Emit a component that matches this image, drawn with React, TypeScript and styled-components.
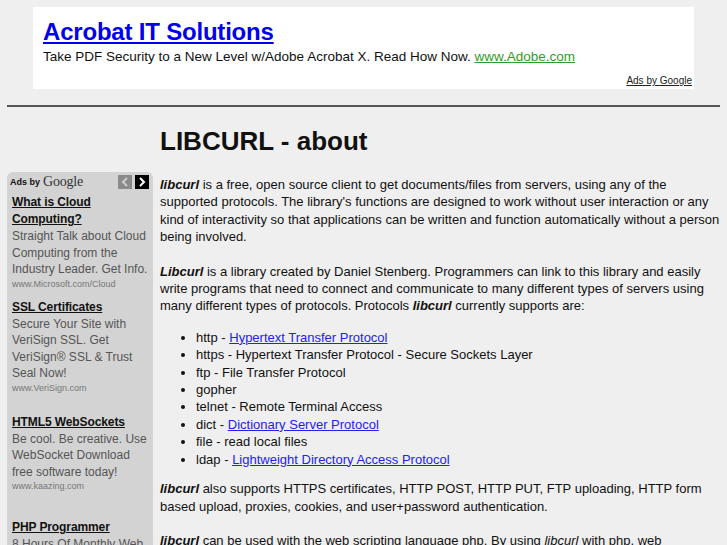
import React from 'react';
import styled, {createGlobalStyle} from 'styled-components';

const Global = createGlobalStyle`
  html, body {
    margin: 0;
    padding: 0;
    background: #efefef;
    font-family: "Liberation Sans", Arial, sans-serif;
    color: #111111;
  }
`;

const Page = styled.div`
  width: 727px;
  height: 545px;
  overflow: hidden;
  padding-top: 7px;
  box-sizing: border-box;
`;

const TopAd = styled.div`
  width: 661px;
  height: 82px;
  margin: 0 auto;
  background: #ffffff;
  box-sizing: border-box;
  padding: 10px 2px 0 10px;
  display: flex;
  flex-direction: column;
`;

const AdTitle = styled.a`
  font-size: 24px;
  font-weight: bold;
  color: #0000ee;
  text-decoration: underline;
  line-height: 30px;
  letter-spacing: -0.2px;
`;

const AdText = styled.div`
  font-size: 13.5px;
  line-height: 18px;
  margin-top: 1px;
  color: #111111;
  > a {
    color: #2ca02c;
    text-decoration: underline;
  }
`;

const AdsBy = styled.a`
  align-self: flex-end;
  margin-top: 9px;
  font-size: 10px;
  color: #222222;
  text-decoration: underline;
`;

const Rule = styled.hr`
  margin: 16px 7px 0;
  border: 0;
  border-top: 2px solid #555555;
  height: 0;
`;

const Columns = styled.div`
  display: flex;
  align-items: flex-start;
  gap: 7px;
  padding: 0 7px;
`;

const Sidebar = styled.div`
  width: 146px;
  flex: none;
  margin-top: 65px;
  background: #d3d3d3;
  border-radius: 6px 6px 0 0;
  padding: 2px 3px 0 5px;
  box-sizing: border-box;
  min-height: 400px;
`;

const SideHeader = styled.div`
  display: flex;
  align-items: center;
  height: 16px;
  margin: 0 0 4px -2px;
`;

const AdsSmall = styled.span`
  font-size: 9px;
  font-weight: bold;
  color: #111111;
  margin-right: 3px;
`;

const GoogleWord = styled.span`
  font-family: "Liberation Serif", "Times New Roman", serif;
  font-size: 14px;
  color: #333333;
  letter-spacing: -0.2px;
`;

const Arrow = styled.span<{ $dark?: boolean }>`
  width: 14px;
  height: 14px;
  background: ${p => (p.$dark ? '#000000' : '#8a8a8a')};
  color: ${p => (p.$dark ? '#ffffff' : '#cccccc')};
  display: flex;
  align-items: center;
  justify-content: center;
  margin-left: ${p => (p.$dark ? '3px' : 'auto')};
  margin-right: ${p => (p.$dark ? '1px' : '0')};
`;

const SideAd = styled.div<{ $gap: number }>`
  margin-bottom: ${p => p.$gap}px;
`;

const SideTitle = styled.a`
  display: block;
  font-size: 12px;
  font-weight: bold;
  color: #111111;
  text-decoration: underline;
  line-height: 17px;
  letter-spacing: -0.1px;
`;

const SideBody = styled.div`
  font-size: 12px;
  color: #555555;
  line-height: 16.5px;
`;

const SideUrl = styled.div`
  font-size: 9px;
  color: #777777;
  line-height: 12px;
`;

const Main = styled.div`
  flex: 1;
  font-size: 13px;
  line-height: 17.4px;
`;

const Title = styled.h1`
  font-size: 26px;
  font-weight: bold;
  margin: 19px 0 20px;
  line-height: 30px;
  color: #111111;
`;

const Para = styled.p`
  margin: 0 0 17px;
`;

const List = styled.ul`
  margin: -3px 0 12px;
  padding-left: 36px;
  list-style: disc;
`;

const Link = styled.a`
  color: #2222ee;
  text-decoration: underline;
`;

const Lib = styled.b`
  font-style: italic;
`;

const Chevron = ({left}: { left?: boolean }) => (
  <svg width="8" height="10" viewBox="0 0 8 10">
    <path
      d={left ? 'M6 1 L2 5 L6 9' : 'M2 1 L6 5 L2 9'}
      stroke="currentColor"
      strokeWidth="2"
      fill="none"
    />
  </svg>
);

const sideAds = [
  {
    title: ['What is Cloud', 'Computing?'],
    body: 'Straight Talk about Cloud Computing from the Industry Leader. Get Info.',
    url: 'www.Microsoft.com/Cloud',
    gap: 9,
  },
  {
    title: ['SSL Certificates'],
    body: 'Secure Your Site with VeriSign SSL. Get VeriSign® SSL & Trust Seal Now!',
    url: 'www.VeriSign.com',
    gap: 20,
  },
  {
    title: ['HTML5 WebSockets'],
    body: 'Be cool. Be creative. Use WebSocket Download free software today!',
    url: 'www.kaazing.com',
    gap: 27,
  },
  {
    title: ['PHP Programmer'],
    body: '8 Hours Of Monthly Web Programming For $299.',
    url: 'www.phpprogrammer.com',
    gap: 12,
  },
];

const App = () => {
  return (
    <Page>
      <Global/>
      <TopAd>
        <AdTitle>Acrobat IT Solutions</AdTitle>
        <AdText>
          Take PDF Security to a New Level w/Adobe Acrobat X. Read How Now. <a>www.Adobe.com</a>
        </AdText>
        <AdsBy>Ads by Google</AdsBy>
      </TopAd>
      <Rule/>
      <Columns>
        <Sidebar>
          <SideHeader>
            <AdsSmall>Ads by</AdsSmall>
            <GoogleWord>Google</GoogleWord>
            <Arrow><Chevron left/></Arrow>
            <Arrow $dark><Chevron/></Arrow>
          </SideHeader>
          {sideAds.map(ad => (
            <SideAd key={ad.url} $gap={ad.gap}>
              <SideTitle>
                {ad.title.map((t, i) => (
                  <React.Fragment key={t}>
                    {i > 0 && <br/>}
                    {t}
                  </React.Fragment>
                ))}
              </SideTitle>
              <SideBody>{ad.body}</SideBody>
              <SideUrl>{ad.url}</SideUrl>
            </SideAd>
          ))}
        </Sidebar>
        <Main>
          <Title>LIBCURL - about</Title>
          <Para>
            <Lib>libcurl</Lib> is a free, open source client to get documents/files from servers, using any of the
            supported protocols. The library's functions are designed to work without user interaction or any
            kind of interactivity so that applications can be written and function automatically without a person
            being involved.
          </Para>
          <Para>
            <Lib>Libcurl</Lib> is a library created by Daniel Stenberg. Programmers can link to this library and easily
            write programs that need to connect and communicate to many different types of servers using
            many different types of protocols. Protocols <Lib>libcurl</Lib> currently supports are:
          </Para>
          <List>
            <li>http - <Link>Hypertext Transfer Protocol</Link></li>
            <li>https - Hypertext Transfer Protocol - Secure Sockets Layer</li>
            <li>ftp - File Transfer Protocol</li>
            <li>gopher</li>
            <li>telnet - Remote Terminal Access</li>
            <li>dict - <Link>Dictionary Server Protocol</Link></li>
            <li>file - read local files</li>
            <li>ldap - <Link>Lightweight Directory Access Protocol</Link></li>
          </List>
          <Para>
            <Lib>libcurl</Lib> also supports HTTPS certificates, HTTP POST, HTTP PUT, FTP uploading, HTTP form
            based upload, proxies, cookies, and user+password authentication.
          </Para>
          <Para>
            <Lib>libcurl</Lib> can be used with the web scripting language php. By using <i>libcurl</i> with php, web
            developers can create programs that talk to servers.
          </Para>
        </Main>
      </Columns>
    </Page>
  );
};

export default App;
